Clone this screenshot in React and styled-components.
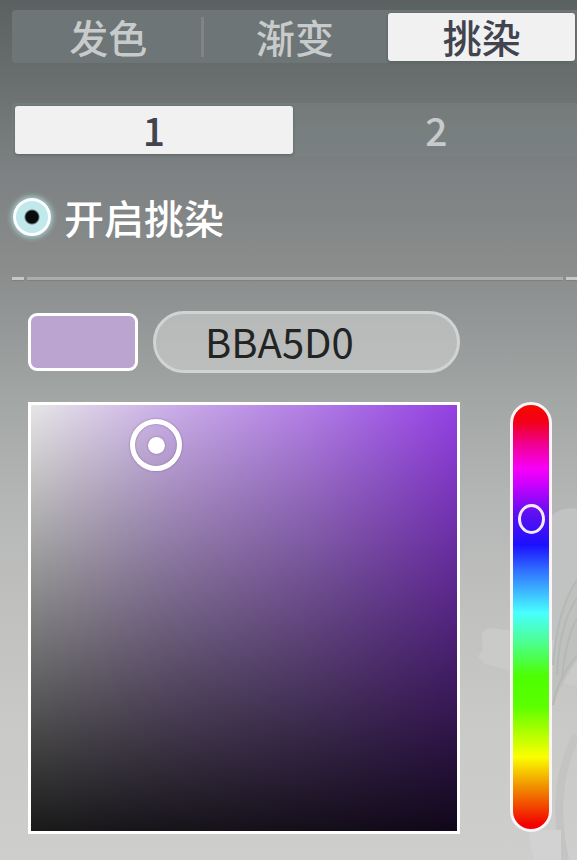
import React, { useState } from "react";
import styled, { createGlobalStyle } from "styled-components";

const Global = createGlobalStyle`
  * { box-sizing: border-box; }
  html, body { margin: 0; }
  body {
    min-height: 100vh;
    font-family: "Noto Sans CJK SC", sans-serif;
    background: linear-gradient(180deg, #5b6061 0%, #6a706f 10%, #7d8183 20%, #8a8c8b 31%, #929696 37%, #a3a7a6 47%, #b4b6b5 58%, #c0c1bf 71%, #c9c9c8 84%, #cececc 100%);
    background-attachment: fixed;
  }
  button, input { font: inherit; margin: 0; }
`;

const Page = styled.main`
  position: relative;
  isolation: isolate;
  min-height: 100vh;
  padding: 10px 0 0 12px;
  overflow: hidden;
`;

const Ornament = styled.svg`
  position: absolute;
  z-index: -1;
  right: 0;
  bottom: 0;
  width: 110px;
  height: 370px;
`;

const TabBar = styled.div`
  display: grid;
  grid-auto-flow: column;
  grid-auto-columns: 1fr;
  gap: ${(p) => p.$gap};
  padding: 3px 2px 2px 3px;
  margin-bottom: ${(p) => p.$after};
  background: ${(p) => p.$fill};
  border-radius: 4px 0 0 4px;
`;

const Tab = styled.button`
  position: relative;
  height: 48px;
  padding: 0 0 2px;
  border: 0;
  border-radius: 3px;
  font-size: 39px;
  line-height: 46px;
  font-weight: 500;
  cursor: pointer;
  color: ${(p) => (p["aria-selected"] ? "#41434e" : "#c8cbcb")};
  background: ${(p) => (p["aria-selected"] ? "#f1f1f1" : "transparent")};
  box-shadow: ${(p) => (p["aria-selected"] ? "0 1px 3px rgba(50, 58, 58, 0.45)" : "none")};
  &::after {
    content: "";
    display: ${(p) => (p.$divided ? "block" : "none")};
    position: absolute;
    top: 4px;
    right: -2px;
    width: 3px;
    height: 40px;
    background: #7f8485;
  }
`;

const Toggle = styled.label`
  display: flex;
  align-items: center;
  gap: 13px;
  height: 56px;
  padding-left: 1px;
  color: #fff;
  font-size: 40px;
  line-height: 56px;
  font-weight: 500;
  cursor: pointer;
`;

const Radio = styled.input`
  appearance: none;
  flex: none;
  width: 38px;
  height: 38px;
  border: 3px solid #fafefe;
  border-radius: 50%;
  background: #c1e8ea;
  box-shadow: 0 0 5px 2px rgba(178, 230, 230, 0.7);
  &:checked { background: radial-gradient(circle, #080c0c 6px, #c1e8ea 8px); }
`;

const Divider = styled.div`
  display: grid;
  grid-template-columns: 12px 1fr 11px;
  gap: 3px;
  margin: 32px 0 31px;
`;

const Line = styled.span`
  height: 3px;
  background: ${(p) => (p.$bright ? "#c5c7c7" : "#abadad")};
  box-shadow: 0 1px 1px rgba(70, 75, 75, 0.2);
`;

const Picker = styled.section`
  display: grid;
  grid-template-columns: 1fr 42px;
  column-gap: 50px;
  row-gap: 29px;
  padding: 0 25px 26px 16px;
`;

const ValueRow = styled.div`
  display: grid;
  grid-column: 1;
  grid-template-columns: 110px 1fr;
  gap: 15px;
  align-items: center;
`;

const Swatch = styled.div`
  height: 58px;
  border: 3px solid #fff;
  border-radius: 9px;
`;

const HexInput = styled.input`
  width: 100%;
  height: 62px;
  padding: 0 20px 3px 49px;
  border: 3px solid #d2d4d4;
  border-radius: 31px;
  background: rgba(210, 212, 210, 0.58);
  color: #222423;
  font-size: 40px;
  outline: none;
`;

const Shade = styled.div`
  position: relative;
  grid-column: 1;
  height: 432px;
  border: 3px solid #fff;
  background:
    linear-gradient(0deg, rgba(0, 0, 0, 0.89) 0%, rgba(0, 0, 0, 0) 100%),
    linear-gradient(90deg, #e6e6e6 0%, #cbaee8 32%, #b27ee6 65%, #9440e4 100%);
  background-origin: padding-box;
  touch-action: none;
  cursor: crosshair;
`;

const Marker = styled.span`
  position: absolute;
  display: grid;
  place-items: center;
  width: 52px;
  height: 52px;
  border: 5px solid #fff;
  border-radius: 50%;
  transform: translate(-50%, -50%);
  box-shadow: 0 0 2px rgba(70, 50, 90, 0.6), inset 0 0 2px rgba(70, 50, 90, 0.5);
  &::after {
    content: "";
    width: 17px;
    height: 17px;
    border-radius: 50%;
    background: #fff;
    box-shadow: 0 0 2px rgba(70, 50, 90, 0.5);
  }
`;

const Hue = styled.input`
  appearance: none;
  writing-mode: vertical-lr;
  width: 42px;
  height: 430px;
  border: 3px solid #fbf5f8;
  border-radius: 21px;
  background: linear-gradient(180deg, #f80800 0%, #f20018 4%, #f0008c 9%, #f800f8 15%, #c800ff 19%, #5a10f0 26%, #1c10ff 33%, #3070ff 39%, #48ffff 49%, #4cff90 56%, #4cff00 64%, #5cff00 71%, #fbff00 83%, #f09000 90%, #f40000 99%);
  background-origin: padding-box;
  cursor: pointer;
  &::-webkit-slider-thumb {
    appearance: none;
    width: 27px;
    height: 30px;
    border: 3px solid #f4eaff;
    border-radius: 50%;
    background: transparent;
  }
`;

const modes = ["发色", "渐变", "挑染"];
const slots = ["1", "2"];

function toHex(hue, s, v) {
  const channel = (n) => {
    const k = (n + hue / 60) % 6;
    const c = v - v * s * Math.max(0, Math.min(k, 4 - k, 1));
    return Math.round(c * 255).toString(16).padStart(2, "0");
  };
  return (channel(5) + channel(3) + channel(1)).toUpperCase();
}

export default function App() {
  const [mode, setMode] = useState(2);
  const [slot, setSlot] = useState(0);
  const [enabled, setEnabled] = useState(true);
  const [hex, setHex] = useState("BBA5D0");
  const [hue, setHue] = useState(90);
  const [point, setPoint] = useState({ x: 0.294, y: 0.094 });

  const pick = (e) => {
    if (e.type === "pointermove" && !e.buttons) return;
    const box = e.currentTarget.getBoundingClientRect();
    const x = Math.max(0, Math.min(1, (e.clientX - box.left) / box.width));
    const y = Math.max(0, Math.min(1, (e.clientY - box.top) / box.height));
    setPoint({ x, y });
    setHex(toHex(360 - hue, x, 1 - y));
  };
  const changeHue = (e) => {
    const next = Number(e.target.value);
    setHue(next);
    setHex(toHex(360 - next, point.x, 1 - point.y));
  };

  return (
    <>
      <Global />
      <Page>
        <Ornament viewBox="0 0 110 370" aria-hidden="true" fill="none">
          <path d="M84 170V26Q96 16 110 19V170Z" fill="#c1c3c2" />
          <path d="M15 146Q16 138 24 138L52 142L110 156V196L42 180L17 174L11 166L16 160Z" fill="#cacbc9" />
          <path d="M86 200Q84 125 110 88V170Q96 190 86 215Z" fill="#bfc1bf" />
          <path d="M86 175Q90 120 110 90M90 185Q92 135 110 108M95 190Q98 150 110 128M110 165Q90 190 86 215" stroke="#b6b8b7" strokeWidth="2" />
          <path d="M110 245Q93 275 92 320Q93 348 98 370" stroke="#c3c4c3" strokeWidth="8" />
          <path d="M62 340Q62 355 68 370H94V340Z" fill="#d1d2d1" />
        </Ornament>

        <TabBar role="tablist" aria-label="染发方式" $gap="0" $after="40px" $fill="#6e7576">
          {modes.map((name, i) => (
            <Tab
              key={name}
              role="tab"
              aria-selected={mode === i}
              $divided={i < modes.length - 1 && mode !== i && mode !== i + 1}
              onClick={() => setMode(i)}
            >
              {name}
            </Tab>
          ))}
        </TabBar>

        <TabBar role="tablist" aria-label="挑染编号" $gap="5px" $after="33px" $fill="rgba(125, 134, 134, 0.45)">
          {slots.map((name, i) => (
            <Tab key={name} role="tab" aria-selected={slot === i} onClick={() => setSlot(i)}>{name}</Tab>
          ))}
        </TabBar>

        <Toggle>
          <Radio type="radio" checked={enabled} onChange={() => {}} onClick={() => setEnabled(!enabled)} />
          开启挑染
        </Toggle>

        <Divider>
          <Line $bright />
          <Line />
          <Line $bright />
        </Divider>

        <Picker>
          <ValueRow>
            <Swatch style={{ backgroundColor: `#${hex}` }} />
            <HexInput aria-label="颜色代码" maxLength={6} value={hex} onChange={(e) => setHex(e.target.value.toUpperCase())} />
          </ValueRow>
          <Shade onPointerDown={pick} onPointerMove={pick}>
            <Marker style={{ left: `${point.x * 100}%`, top: `${point.y * 100}%` }} />
          </Shade>
          <Hue type="range" aria-label="色相" min="0" max="360" value={hue} onChange={changeHue} />
        </Picker>
      </Page>
    </>
  );
}
